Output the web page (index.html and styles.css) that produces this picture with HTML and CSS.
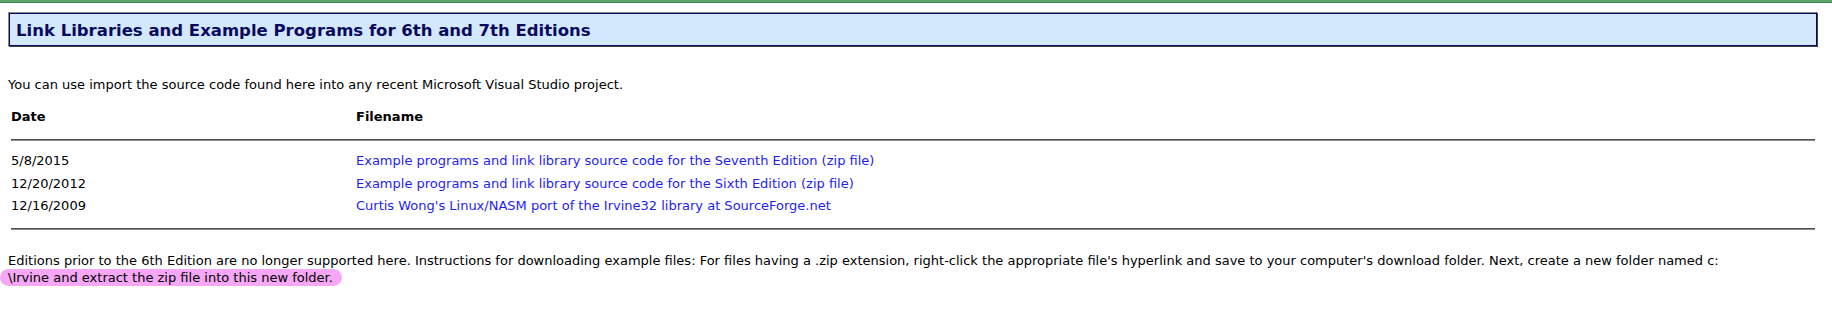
FILE: index.html
```html
<!DOCTYPE html>
<html>
<head>
<meta charset="utf-8">
<title>Link Libraries and Example Programs</title>
<link rel="stylesheet" href="styles.css">
</head>
<body>
<div class="topbar"></div>
<div class="page">
  <div class="titlebox">
    <h2 class="title">Link Libraries and Example Programs for 6th and 7th Editions</h2>
  </div>
  <p class="intro">You can use import the source code found here into any recent Microsoft Visual Studio project.</p>
  <div class="files">
    <div class="row head">
      <div class="cell">Date</div>
      <div class="cell">Filename</div>
    </div>
    <div class="rule"></div>
    <div class="rows">
      <div class="row">
        <div class="cell">5/8/2015</div>
        <div class="cell"><a class="link" href="#">Example programs and link library source code for the Seventh Edition (zip file)</a></div>
      </div>
      <div class="row">
        <div class="cell">12/20/2012</div>
        <div class="cell"><a class="link" href="#">Example programs and link library source code for the Sixth Edition (zip file)</a></div>
      </div>
      <div class="row">
        <div class="cell">12/16/2009</div>
        <div class="cell"><a class="link" href="#">Curtis Wong's Linux/NASM port of the Irvine32 library at SourceForge.net</a></div>
      </div>
    </div>
    <div class="rule"></div>
  </div>
  <p class="note">Editions prior to the 6th Edition are no longer supported here. Instructions for downloading example files: For files having a .zip extension, right-click the appropriate file's hyperlink and save to your computer's download folder. Next, create a new folder named c:<br><span class="hl">\Irvine and extract the zip file into this new folder.</span></p>
</div>
</body>
</html>
```

FILE: styles.css
```css
html, body {
  margin: 0;
  padding: 0;
  background: #ffffff;
}

body {
  font-family: "DejaVu Sans", Verdana, sans-serif;
  font-size: 13px;
  color: #000000;
}

.topbar {
  height: 2px;
  background: #5ba46c;
  border-bottom: 1px solid #3f8a52;
}

.page {
  padding: 9px 15px 0 8px;
}

.titlebox {
  background: #d4e8fc;
  border: 1px solid #0a0a5c;
  border-top-color: #8a8a8a;
  border-left-color: #8a8a8a;
  box-shadow: inset 1px 1px 0 #0a0a5c, 1px 1px 0 #444;
  padding: 9px 7px 5px 7px;
}

.title {
  margin: 0;
  font-size: 16.5px;
  font-weight: bold;
  line-height: 18px;
  color: #0a0a5c;
}

.intro {
  margin: 31px 0 0 0;
  line-height: 16px;
}

.files {
  margin: 16px 2px 0 3px;
}

.row {
  display: grid;
  grid-template-columns: 345px 1fr;
}

.head {
  font-weight: bold;
  line-height: 16px;
}

.rule {
  height: 0;
  border-top: 1px solid #505050;
  border-bottom: 1px solid #8a8a8a;
}

.head + .rule {
  margin-top: 14px;
}

.rows {
  padding: 12px 0 13px 0;
  display: flex;
  flex-direction: column;
  gap: 6px;
}

.rows .row {
  line-height: 16.5px;
}

.link {
  color: #1e1ef0;
  text-decoration: none;
}

.note {
  margin: 22px 0 0 0;
  line-height: 17px;
}

.hl {
  background: #f6a8f6;
  border-radius: 9px;
  padding: 1px 9px 1px 8px;
  margin-left: -8px;
}
```
